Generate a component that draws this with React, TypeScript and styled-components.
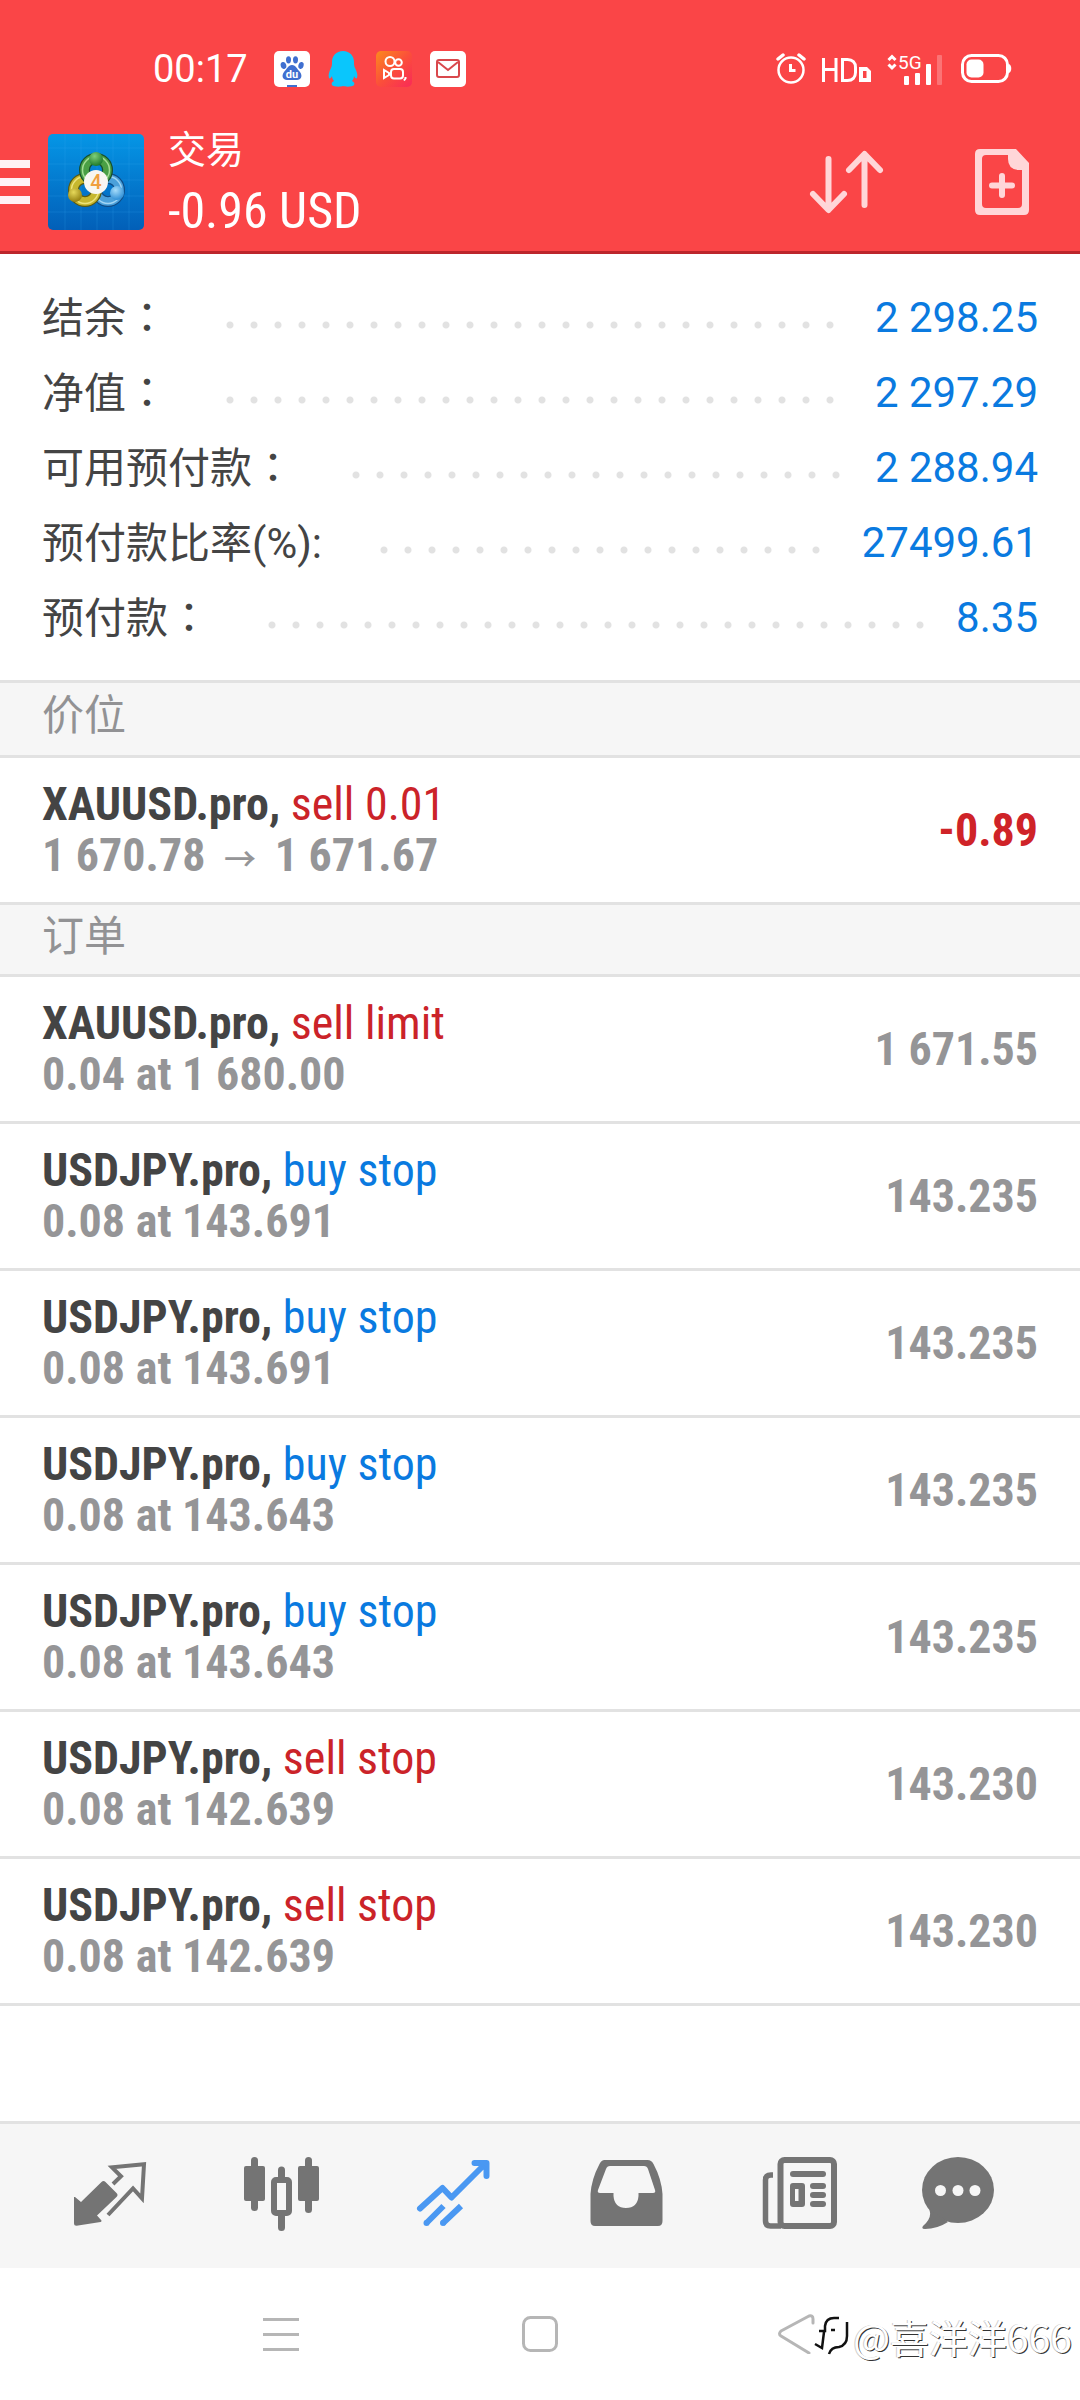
import React from "react";
import styled, { createGlobalStyle } from "styled-components";

const GlobalStyle = createGlobalStyle`
  *, *::before, *::after { box-sizing: border-box; }
  body { margin: 0; background: #fff; }
  button { margin: 0; padding: 0; border: 0; background: none; cursor: pointer; }
  svg { display: block; }
`;

const sans = `Roboto, "Noto Sans CJK SC", sans-serif`;
const narrow = `"Roboto Condensed", "Liberation Sans Narrow", "Noto Sans CJK SC", sans-serif`;

const Screen = styled.div`
  position: relative;
  display: flex;
  flex-direction: column;
  min-height: 100vh;
  background: #fff;
  color: #444;
  font-family: ${sans};
`;

const Header = styled.header`
  background: #fa4547;
  border-bottom: 3px solid #bc262c;
  color: #fff;
`;

const StatusBar = styled.div`
  display: flex;
  align-items: center;
  justify-content: space-between;
  padding: 48px 68px 22px 153px;
`;

const StatusGroup = styled.div<{ $gap: number }>`
  display: flex;
  align-items: center;
  gap: ${(p) => p.$gap}px;
`;

const Clock = styled.time`
  margin-right: 8px;
  font-size: 38px;
  line-height: 42px;
`;

const TitleBar = styled.div`
  display: flex;
  align-items: center;
  height: 139px;
  padding-right: 50px;
`;

const MenuButton = styled.button`
  display: flex;
  flex-direction: column;
  gap: 10px;
  width: 30px;
  margin-right: 18px;
`;

const MenuBar = styled.span`
  height: 8px;
  background: #fff1f6;
`;

const TitleText = styled.div`
  display: flex;
  flex-direction: column;
  flex: 1;
  padding-top: 4px;
  margin-left: 24px;
`;

const Title = styled.h1`
  margin: 0;
  font-size: 38px;
  font-weight: 400;
  line-height: 54px;
`;

const Profit = styled.p`
  margin: 0;
  font-family: ${narrow};
  font-size: 50px;
  line-height: 68px;
`;

const Actions = styled.div`
  display: flex;
  align-items: center;
  gap: 89px;
`;

const Summary = styled.dl`
  margin: 0;
  padding: 26px 42px 25px;
`;

const SummaryRow = styled.div`
  display: flex;
  align-items: center;
  height: 75px;
  font-size: 42px;
`;

const SummaryLabel = styled.dt`
  padding-bottom: 6px;
  white-space: nowrap;
`;

const WideColon = styled.span`
  font-family: "Noto Sans CJK TC", sans-serif;
`;

const Leader = styled.span`
  flex: 1;
  height: 24px;
  margin: 14px 28px 0 50px;
  background: radial-gradient(circle, #e2e2e2 3px, transparent 4px) 0 0 / 24px 24px repeat-x;
`;

const SummaryValue = styled.dd`
  margin: 0;
  color: #0a7ae0;
  white-space: nowrap;
`;

const SectionTitle = styled.h2<{ $first?: boolean }>`
  margin: 0;
  padding: 0 42px 6px;
  border-top: ${(p) => (p.$first ? "3px solid #e2e2e2" : "0")};
  border-bottom: 3px solid #e2e2e2;
  background: #f6f6f6;
  color: #929294;
  font-size: 42px;
  font-weight: 400;
  line-height: ${(p) => (p.$first ? 66 : 63)}px;
`;

const List = styled.ul`
  margin: 0;
  padding: 0;
  list-style: none;
`;

const Item = styled.li`
  display: flex;
  align-items: center;
  justify-content: space-between;
  height: 147px;
  padding: 0 42px;
  border-bottom: 3px solid #e2e2e2;
  font-family: ${narrow};
  font-size: 46px;
  font-weight: 700;
  line-height: 51px;
`;

const Line = styled.div<{ $muted?: boolean }>`
  color: ${(p) => (p.$muted ? "#959597" : "#444")};
`;

type Side = "buy" | "sell";

const Action = styled.span<{ $side: Side }>`
  color: ${(p) => (p.$side === "buy" ? "#0a7ae0" : "#cb2329")};
  font-weight: 400;
`;

const Arrow = styled.span`
  margin: 0 8px;
  font-family: "Noto Sans CJK SC", sans-serif;
  font-size: 32px;
  font-weight: 500;
  line-height: 1;
`;

const Amount = styled.span<{ $loss?: boolean }>`
  color: ${(p) => (p.$loss ? "#cf2328" : "#959597")};
`;

const Main = styled.main`
  flex: 1;
`;

const TabBar = styled.nav`
  display: grid;
  grid-template-columns: repeat(6, 1fr);
  padding: 24px;
  border-top: 3px solid #e2e2e2;
  background: #f6f6f6;
`;

const Tab = styled.button<{ $active?: boolean }>`
  display: flex;
  justify-content: center;
  color: ${(p) => (p.$active ? "#4a98f2" : "#747474")};
`;

const SystemNav = styled.nav`
  display: grid;
  grid-template-columns: repeat(3, 1fr);
  align-items: center;
  height: 132px;
  padding: 0 14%;
`;

const SystemButton = styled.button`
  display: flex;
  justify-content: center;
  color: #b6b6b6;
`;

const Watermark = styled.div`
  position: absolute;
  right: 8px;
  bottom: 38px;
  display: flex;
  align-items: center;
  gap: 4px;
  color: #fff;
  font-family: "Noto Sans CJK SC", sans-serif;
  font-size: 39px;
  line-height: 52px;
  text-shadow: 1px 1px 0 #333, -1px 0 0 #ccc;
`;

const BaiduIcon = () => (
  <svg width="36" height="36" viewBox="0 0 36 36" aria-hidden="true">
    <rect width="36" height="36" rx="5" fill="#fff" />
    <g fill="#3f6fd0">
      <ellipse cx="9.500" cy="14.500" rx="2.800" ry="3.500" transform="rotate(-15 9.500 14.500)" />
      <ellipse cx="14.500" cy="8.800" rx="2.500" ry="3.600" />
      <ellipse cx="21.500" cy="8.800" rx="2.500" ry="3.600" />
      <ellipse cx="27" cy="14.500" rx="2.600" ry="3.500" transform="rotate(15 27 14.500)" />
      <path d="M18 14c4 0 5 4 8 7 3 4 1 8-3 8h-10c-4 0-6-4-3-8 3-3 4-7 8-7z" />
      <rect x="13" y="34" width="10" height="2" />
    </g>
    <text x="18" y="27" fill="#fff" fontFamily="Roboto, sans-serif" fontSize="11" fontWeight="700" textAnchor="middle">du</text>
  </svg>
);

const PenguinIcon = () => (
  <svg width="30" height="36" viewBox="0 0 30 36" aria-hidden="true">
    <path fill="#0ac6fc" d="M15 0c7 0 11 5 11 11 0 2 0 4 1 6 2 4 3 7 2 10-1 1-2 0-3-2 0 2-1 4-2 5 2 1 3 2 2 4-1 2-9 2-11 1-2 1-10 1-11-1-1-2 0-3 2-4-1-1-2-3-2-5-1 2-2 3-3 2-1-3 0-6 2-10 1-2 1-4 1-6C4 5 8 0 15 0z" />
  </svg>
);

const VideoIcon = () => (
  <svg width="36" height="36" viewBox="0 0 36 36" aria-hidden="true">
    <defs>
      <linearGradient id="video" x1="0" y1="0" x2="1" y2="1">
        <stop offset="0" stopColor="#fb8a1e" />
        <stop offset="0.5" stopColor="#fb4f3a" />
        <stop offset="1" stopColor="#f92a58" />
      </linearGradient>
    </defs>
    <rect width="36" height="36" rx="5" fill="url(#video)" />
    <g fill="none" stroke="#fff" strokeWidth="2">
      <circle cx="14" cy="10.500" r="4.500" />
      <circle cx="22.500" cy="11.500" r="3.300" />
      <rect x="15" y="18" width="12" height="9.500" rx="3" />
      <path d="M8 19v8l5-3v-2z" />
      <path d="M29.500 26v1.500l-1.500 2" />
    </g>
  </svg>
);

const MailIcon = () => (
  <svg width="36" height="36" viewBox="0 0 36 36" aria-hidden="true">
    <rect width="36" height="36" rx="5" fill="#fff" />
    <rect x="7" y="9" width="22" height="17" rx="2" fill="none" stroke="#d9484c" strokeWidth="2" />
    <path d="M8 11l10 8 10-8" fill="none" stroke="#d9484c" strokeWidth="2" />
  </svg>
);

const AlarmIcon = () => (
  <svg width="30" height="34" viewBox="0 0 30 34" fill="none" stroke="#fff" aria-hidden="true">
    <circle cx="15" cy="18" r="12.500" strokeWidth="2.500" />
    <path d="M2 7l5-4M28 7l-5-4" strokeWidth="3.500" strokeLinecap="round" />
    <path d="M14.500 12v6.500h5" strokeWidth="3" />
  </svg>
);

const HdIcon = () => (
  <svg width="49" height="34" viewBox="0 0 49 34" aria-hidden="true">
    <g fill="none" stroke="#fff" strokeWidth="3">
      <path d="M1.500 6v24M14 6v24M1.500 17.500h12.500" />
      <path d="M20.500 7.500v21h5c5 0 8-3 8-8v-5c0-5-3-8-8-8z" />
    </g>
    <path fill="#fff" fillRule="evenodd" d="M37 15h8l4 4v11H37zM41 19v7h3.500v-7z" />
  </svg>
);

const SignalIcon = () => (
  <svg width="58" height="34" viewBox="0 0 58 34" aria-hidden="true">
    <path d="M1.500 8L5 4.500 8.500 8M1.500 12.500L5 16l3.500-3.500" fill="none" stroke="#fff" strokeWidth="3" />
    <text x="11" y="17" fill="#fff" fontFamily="Roboto, sans-serif" fontSize="19">5G</text>
    <g fill="#fff">
      <rect x="17" y="24" width="5" height="9" rx="1" />
      <rect x="28" y="21" width="5" height="12" rx="1" />
      <rect x="39" y="12" width="5" height="21" rx="1" />
      <rect x="50" y="3" width="5" height="30" rx="1" opacity="0.250" />
    </g>
  </svg>
);

const BatteryIcon = () => (
  <svg width="51" height="30" viewBox="0 0 51 30" aria-hidden="true">
    <rect x="1.500" y="1.500" width="45" height="26" rx="9" fill="none" stroke="#fff" strokeWidth="3" />
    <rect x="5.500" y="5.500" width="17" height="18" rx="5" fill="#fff" />
    <path d="M48 10c3 1 3 8 0 9z" fill="#fff" />
  </svg>
);

const AppLogo = () => (
  <svg width="96" height="96" viewBox="0 0 96 96" aria-hidden="true">
    <defs>
      <linearGradient id="tile" x1="0" y1="0" x2="0" y2="1">
        <stop offset="0" stopColor="#0596e6" />
        <stop offset="1" stopColor="#025fb8" />
      </linearGradient>
      <radialGradient id="green" cx="0.4" cy="0.3" r="0.7">
        <stop offset="0" stopColor="#7fcf78" />
        <stop offset="1" stopColor="#1f7a2c" />
      </radialGradient>
      <radialGradient id="gold" cx="0.4" cy="0.3" r="0.7">
        <stop offset="0" stopColor="#e6d95a" />
        <stop offset="1" stopColor="#948010" />
      </radialGradient>
      <radialGradient id="azure" cx="0.4" cy="0.3" r="0.7">
        <stop offset="0" stopColor="#a6dcfa" />
        <stop offset="1" stopColor="#2f8fd6" />
      </radialGradient>
    </defs>
    <rect width="96" height="96" rx="5" fill="url(#tile)" />
    <path d="M17 0v96M33 0v96M49 0v96M65 0v96M81 0v96M0 14h96M0 30h96M0 46h96M0 62h96M0 78h96" stroke="#3fb0f0" strokeOpacity="0.200" />
    <g fill="none">
      <circle cx="60" cy="56" r="11.500" stroke="#0f4c86" strokeWidth="11" />
      <circle cx="60" cy="56" r="11.500" stroke="#4ba0da" strokeWidth="8.500" />
      <circle cx="60" cy="56" r="13.500" stroke="#9fd4f4" strokeWidth="1.500" />
      <circle cx="37" cy="56" r="11.500" stroke="#5a5a14" strokeWidth="11" />
      <circle cx="37" cy="56" r="11.500" stroke="#c6b72e" strokeWidth="8.500" />
      <circle cx="37" cy="56" r="13.500" stroke="#ece27a" strokeWidth="1.500" />
      <circle cx="48" cy="36" r="11.500" stroke="#174f2c" strokeWidth="11" />
      <circle cx="48" cy="36" r="11.500" stroke="#4a9f45" strokeWidth="8.500" />
      <circle cx="48" cy="36" r="13.500" stroke="#a4dc94" strokeWidth="1.500" />
    </g>
    <circle cx="48" cy="25" r="7" fill="url(#green)" />
    <circle cx="27" cy="61" r="7" fill="url(#gold)" />
    <circle cx="69" cy="59" r="7" fill="url(#azure)" />
    <circle cx="48" cy="48" r="12" fill="#f8f6f2" />
    <text x="48" y="55" fill="#f0a040" fontFamily="Roboto, sans-serif" fontSize="20" fontWeight="500" textAnchor="middle">4</text>
  </svg>
);

const SortIcon = () => (
  <svg width="76" height="68" viewBox="0 0 76 68" fill="none" stroke="#ffd6d8" strokeWidth="6" strokeLinecap="round" strokeLinejoin="round" aria-hidden="true">
    <path d="M19.500 11v50M4 46l15.500 16L35 46" />
    <path d="M55.500 57V7M40 22L55.500 6 71 22" />
  </svg>
);

const NewOrderIcon = () => (
  <svg width="56" height="68" viewBox="0 0 56 68" aria-hidden="true">
    <path fill="#ffd6d8" fillRule="evenodd" d="M6 1h36l13 14v47q0 5-5 5H6q-5 0-5-5V6q0-5 5-5zM12 7q-4 0-4 4v45q0 4 4 4h32q4 0 4-4V22h-4q-10-1-10-11V7z" />
    <path d="M28 28v19M18 37.500h20" stroke="#ffd6d8" strokeWidth="6" strokeLinecap="round" />
  </svg>
);

const iconProps = { width: 96, height: 96, viewBox: "0 0 96 96", fill: "currentColor", "aria-hidden": true } as const;

const QuotesIcon = () => (
  <svg {...iconProps}>
    <path d="M39.500 34q2-2 4 0l11 11q2 2 0 4L35 67.500l4.500 5q0 1.500-1 1.500l-24 3.700q-2.500 0-2.500-2.500V49l1 0 6 5z" />
    <path d="M51 36l8-7.700-9-9 32-3-2 34-9-9.800-25 26.500" fill="none" stroke="currentColor" strokeWidth="4" />
  </svg>
);

const ChartIcon = () => (
  <svg {...iconProps}>
    <rect x="10" y="18" width="21" height="35" rx="2" />
    <rect x="17" y="9" width="7" height="54" rx="3.500" />
    <rect x="64" y="18" width="21" height="35" rx="2" />
    <rect x="71" y="9" width="7" height="56" rx="3.500" />
    <path d="M44 30v-8q0-3.500 3.500-3.500T51 22v8zM44 67v12.500q0 3.500 3.500 3.500t3.500-3.500V67z" />
    <rect x="40" y="32" width="15" height="33" rx="2" fill="none" stroke="currentColor" strokeWidth="6" />
  </svg>
);

const TradeIcon = () => (
  <svg {...iconProps} fill="none" stroke="currentColor" strokeWidth="6" strokeLinejoin="round">
    <path d="M14 60.500L36.500 40l9 9.500L77 18M68.500 15h12v13" strokeLinecap="round" />
    <path d="M74 14h7v8z" fill="currentColor" strokeWidth="2" />
    <path d="M20 75.500L37.500 58M36.500 75.500L55 58" />
    <circle cx="20.500" cy="75" r="3" fill="currentColor" stroke="none" />
    <circle cx="37" cy="75" r="3" fill="currentColor" stroke="none" />
  </svg>
);

const HistoryIcon = () => (
  <svg {...iconProps}>
    <path fillRule="evenodd" d="M12.500 46q1-15 9-30 2-4 5-4h43q4 0 6 4 8 15 9 30v27q0 5-4.500 5h-63q-4.500 0-4.500-5zM32 18q-3 0-4 3l-8 21q-1 3 2 3h13.500v3q1 12 12.500 12t12.500-12v-3H75q3 0 2-3l-7-21q-1-3-4-3z" />
  </svg>
);

const NewsIcon = () => (
  <svg {...iconProps}>
    <g fill="none" stroke="currentColor" strokeWidth="6">
      <rect x="30.500" y="12" width="53.500" height="66" rx="4" />
      <path d="M23 27h-2q-5.500 0-5.500 5v41q0 5 5 5H31" strokeWidth="5.500" />
    </g>
    <rect x="40" y="23" width="36" height="6" rx="3" />
    <path fillRule="evenodd" d="M43 35h9q3 0 3 3v18q0 3-3 3h-9q-3 0-3-3V38q0-3 3-3zM45 41v12h3.500V41z" />
    <rect x="60" y="35" width="16" height="6" rx="3" />
    <rect x="60" y="44" width="16" height="6" rx="3" />
    <rect x="60" y="53" width="16" height="6" rx="3" />
  </svg>
);

const ChatIcon = () => (
  <svg {...iconProps}>
    <ellipse cx="36" cy="42" rx="36" ry="33" />
    <path d="M7 61q4 8-6 17-2 3 2 3 12 0 23-7z" />
    <g fill="#f6f6f6">
      <circle cx="18.500" cy="42.500" r="5.500" />
      <circle cx="36" cy="42.500" r="5.500" />
      <circle cx="53" cy="42.500" r="5.500" />
    </g>
  </svg>
);

const tabs = [
  { label: "行情", Icon: QuotesIcon },
  { label: "图表", Icon: ChartIcon },
  { label: "交易", Icon: TradeIcon, active: true },
  { label: "历史", Icon: HistoryIcon },
  { label: "新闻", Icon: NewsIcon },
  { label: "消息", Icon: ChatIcon },
];

const summary = [
  { label: "结余", wide: true, value: "2 298.25" },
  { label: "净值", wide: true, value: "2 297.29" },
  { label: "可用预付款", wide: true, value: "2 288.94" },
  { label: "预付款比率(%):", wide: false, value: "27499.61" },
  { label: "预付款", wide: true, value: "8.35" },
];

interface Entry {
  symbol: string;
  side: Side;
  action: string;
  detail: React.ReactNode;
  amount: string;
  loss?: boolean;
}

const positions: Entry[] = [
  {
    symbol: "XAUUSD.pro",
    side: "sell",
    action: "sell 0.01",
    detail: (
      <>
        1 670.78 <Arrow>→</Arrow> 1 671.67
      </>
    ),
    amount: "-0.89",
    loss: true,
  },
];

const orders: Entry[] = [
  { symbol: "XAUUSD.pro", side: "sell", action: "sell limit", detail: "0.04 at 1 680.00", amount: "1 671.55" },
  { symbol: "USDJPY.pro", side: "buy", action: "buy stop", detail: "0.08 at 143.691", amount: "143.235" },
  { symbol: "USDJPY.pro", side: "buy", action: "buy stop", detail: "0.08 at 143.691", amount: "143.235" },
  { symbol: "USDJPY.pro", side: "buy", action: "buy stop", detail: "0.08 at 143.643", amount: "143.235" },
  { symbol: "USDJPY.pro", side: "buy", action: "buy stop", detail: "0.08 at 143.643", amount: "143.235" },
  { symbol: "USDJPY.pro", side: "sell", action: "sell stop", detail: "0.08 at 142.639", amount: "143.230" },
  { symbol: "USDJPY.pro", side: "sell", action: "sell stop", detail: "0.08 at 142.639", amount: "143.230" },
];

const EntryList = ({ entries }: { entries: Entry[] }) => (
  <List>
    {entries.map((entry, index) => (
      <Item key={index}>
        <div>
          <Line>
            {entry.symbol}, <Action $side={entry.side}>{entry.action}</Action>
          </Line>
          <Line $muted>{entry.detail}</Line>
        </div>
        <Amount $loss={entry.loss}>{entry.amount}</Amount>
      </Item>
    ))}
  </List>
);

export default function App() {
  return (
    <Screen>
      <GlobalStyle />
      <Header>
        <StatusBar>
          <StatusGroup $gap={18}>
            <Clock>00:17</Clock>
            <BaiduIcon />
            <PenguinIcon />
            <VideoIcon />
            <MailIcon />
          </StatusGroup>
          <StatusGroup $gap={16}>
            <AlarmIcon />
            <HdIcon />
            <SignalIcon />
            <BatteryIcon />
          </StatusGroup>
        </StatusBar>
        <TitleBar>
          <MenuButton type="button" aria-label="菜单">
            <MenuBar />
            <MenuBar />
            <MenuBar />
          </MenuButton>
          <AppLogo />
          <TitleText>
            <Title>交易</Title>
            <Profit>-0.96 USD</Profit>
          </TitleText>
          <Actions>
            <button type="button" aria-label="排序"><SortIcon /></button>
            <button type="button" aria-label="新订单"><NewOrderIcon /></button>
          </Actions>
        </TitleBar>
      </Header>
      <Main>
        <Summary>
          {summary.map((row) => (
            <SummaryRow key={row.label}>
              <SummaryLabel>
                {row.label}
                {row.wide && <WideColon>：</WideColon>}
              </SummaryLabel>
              <Leader />
              <SummaryValue>{row.value}</SummaryValue>
            </SummaryRow>
          ))}
        </Summary>
        <SectionTitle $first>价位</SectionTitle>
        <EntryList entries={positions} />
        <SectionTitle>订单</SectionTitle>
        <EntryList entries={orders} />
      </Main>
      <TabBar>
        {tabs.map(({ label, Icon, active }) => (
          <Tab key={label} type="button" aria-label={label} $active={active}>
            <Icon />
          </Tab>
        ))}
      </TabBar>
      <SystemNav>
        <SystemButton type="button" aria-label="最近任务">
          <svg width="36" height="40" viewBox="0 0 36 40" stroke="currentColor" strokeWidth="3" aria-hidden="true">
            <path d="M0 5.500h36M0 20.500h36M0 35.500h36" />
          </svg>
        </SystemButton>
        <SystemButton type="button" aria-label="主屏幕">
          <svg width="36" height="40" viewBox="0 0 36 40" fill="none" stroke="currentColor" strokeWidth="3" aria-hidden="true">
            <rect x="1.500" y="3.500" width="33" height="33" rx="7" />
          </svg>
        </SystemButton>
        <SystemButton type="button" aria-label="返回">
          <svg width="42" height="40" viewBox="0 0 42 40" fill="none" stroke="currentColor" strokeWidth="3" strokeLinecap="round" strokeLinejoin="round" aria-hidden="true">
            <path d="M35 9V5q0-4-4-3L3 17q-3 3 0 5l28 17" />
          </svg>
        </SystemButton>
      </SystemNav>
      <Watermark>
        <svg width="36" height="40" viewBox="0 0 36 40" fill="none" stroke="#111" strokeWidth="2.500" aria-hidden="true">
          <path d="M6 15h6v-5q1-8 9-8h5M11 16L9 32l-7-4M18 14h4M34 6v14q0 9-8 11-8 0-10 7" />
        </svg>
        <span>@喜洋洋666</span>
      </Watermark>
    </Screen>
  );
}
